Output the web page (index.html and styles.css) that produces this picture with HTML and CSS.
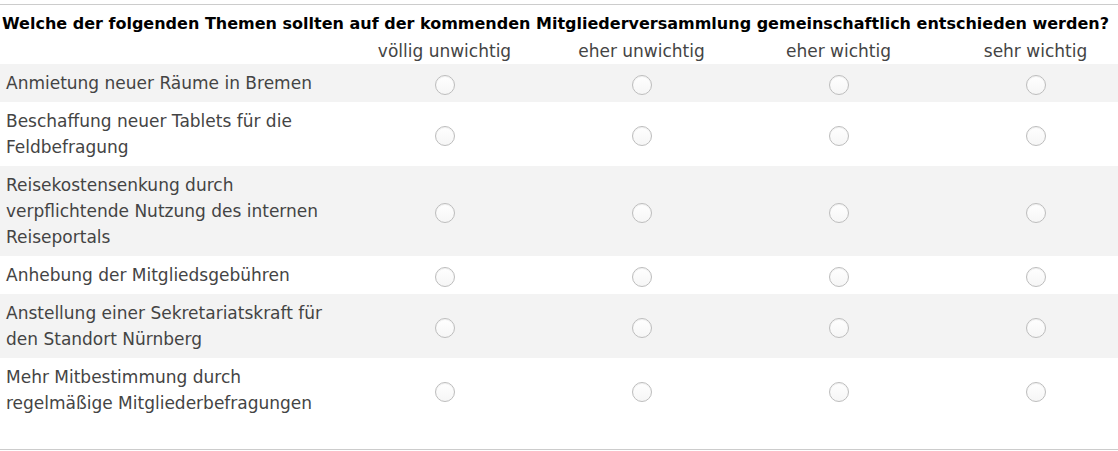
FILE: index.html
```html
<!DOCTYPE html>
<html lang="de">
<head>
<meta charset="utf-8">
<title>Matrixfrage</title>
<link rel="stylesheet" href="styles.css">
</head>
<body>
<div class="question">
  <h2 class="q-title">Welche der folgenden Themen sollten auf der kommenden Mitgliederversammlung gemeinschaftlich entschieden werden?</h2>
  <table class="matrix">
    <colgroup>
      <col class="c-label">
      <col class="c-opt"><col class="c-opt"><col class="c-opt"><col class="c-opt">
    </colgroup>
    <thead>
      <tr>
        <th></th>
        <th>völlig unwichtig</th>
        <th>eher unwichtig</th>
        <th>eher wichtig</th>
        <th>sehr wichtig</th>
      </tr>
    </thead>
    <tbody>
      <tr class="odd">
        <td class="label">Anmietung neuer Räume in Bremen</td>
        <td><span class="radio"></span></td><td><span class="radio"></span></td><td><span class="radio"></span></td><td><span class="radio"></span></td>
      </tr>
      <tr>
        <td class="label">Beschaffung neuer Tablets für die Feldbefragung</td>
        <td><span class="radio"></span></td><td><span class="radio"></span></td><td><span class="radio"></span></td><td><span class="radio"></span></td>
      </tr>
      <tr class="odd">
        <td class="label">Reisekostensenkung durch verpflichtende Nutzung des internen Reiseportals</td>
        <td><span class="radio"></span></td><td><span class="radio"></span></td><td><span class="radio"></span></td><td><span class="radio"></span></td>
      </tr>
      <tr>
        <td class="label">Anhebung der Mitgliedsgebühren</td>
        <td><span class="radio"></span></td><td><span class="radio"></span></td><td><span class="radio"></span></td><td><span class="radio"></span></td>
      </tr>
      <tr class="odd">
        <td class="label">Anstellung einer Sekretariatskraft für den Standort Nürnberg</td>
        <td><span class="radio"></span></td><td><span class="radio"></span></td><td><span class="radio"></span></td><td><span class="radio"></span></td>
      </tr>
      <tr>
        <td class="label">Mehr Mitbestimmung durch regelmäßige Mitgliederbefragungen</td>
        <td><span class="radio"></span></td><td><span class="radio"></span></td><td><span class="radio"></span></td><td><span class="radio"></span></td>
      </tr>
    </tbody>
  </table>
</div>
</body>
</html>
```

FILE: styles.css
```css
html, body {
  margin: 0;
  padding: 0;
  background: #ffffff;
  overflow: hidden;
}

body {
  font-family: "DejaVu Sans", "Liberation Sans", sans-serif;
  color: #444444;
}

.question {
  margin-top: 4px;
  width: 1134px;
  height: 446px;
  border-top: 1px solid #cccccc;
  border-bottom: 1px solid #cccccc;
  box-sizing: border-box;
  padding-top: 7px;
}

.q-title {
  margin: 0;
  padding-left: 2px;
  font-size: 16px;
  font-weight: bold;
  line-height: 24px;
  color: #000000;
  white-space: nowrap;
}

.matrix {
  border-collapse: collapse;
  border-spacing: 0;
  table-layout: fixed;
  width: 1134px;
  margin-top: 0;
}

.c-label { width: 346px; }
.c-opt { width: 197px; }

.matrix th {
  font-weight: normal;
  font-size: 17px;
  line-height: 20px;
  padding: 5px 0 3px;
  text-align: center;
  color: #444444;
  white-space: nowrap;
}

.matrix td {
  font-size: 17px;
  line-height: 26px;
  padding: 6px 0;
  text-align: center;
  vertical-align: middle;
}

.matrix td.label {
  text-align: left;
  padding: 6px 8px 6px 6px;
}

.matrix tr.odd td {
  background: #f3f3f3;
}

.radio {
  display: inline-block;
  width: 18px;
  height: 18px;
  margin-top: 2px;
  border: 1px solid #bdbdbd;
  border-radius: 50%;
  background: linear-gradient(#ffffff, #f6f6f6);
  vertical-align: middle;
  box-shadow: inset 0 1px 1px rgba(0,0,0,0.06);
}
```
